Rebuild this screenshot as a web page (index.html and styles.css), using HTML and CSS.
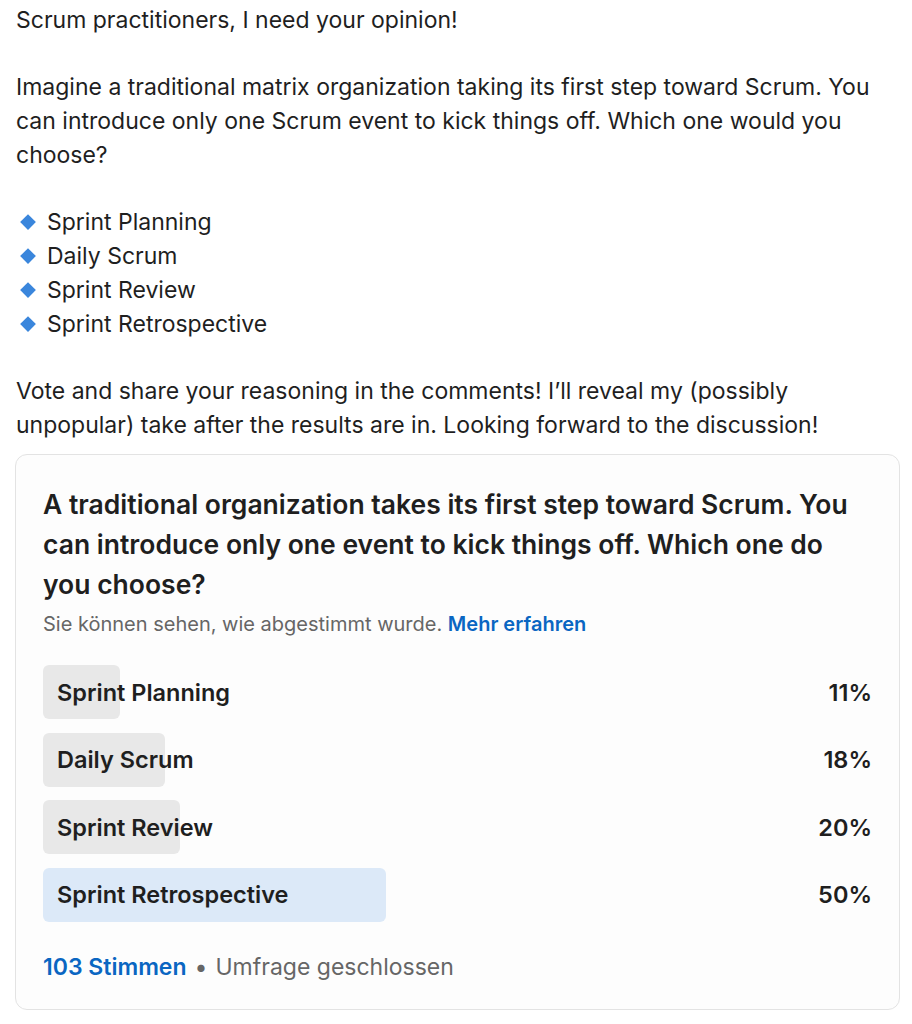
FILE: index.html
```html
<!DOCTYPE html>
<html lang="en">
<head>
    <meta charset="UTF-8">
    <meta name="viewport" content="width=device-width, initial-scale=1.0">
    <title>Scrum poll</title>
    <link rel="stylesheet" href="styles.css">
</head>
<body>

<!-- Texte du post -->
<div class="post-text">
    <p>Scrum practitioners, I need your opinion!</p>
    <p>Imagine a traditional matrix organization taking its first step toward Scrum. You can introduce only one Scrum event to kick things off. Which one would you choose?</p>
    <ul class="events">
        <li><svg class="diamond" viewBox="0 0 16 16"><path d="M8 1 L15 8 L8 15 L1 8 Z"/></svg>Sprint Planning</li>
        <li><svg class="diamond" viewBox="0 0 16 16"><path d="M8 1 L15 8 L8 15 L1 8 Z"/></svg>Daily Scrum</li>
        <li><svg class="diamond" viewBox="0 0 16 16"><path d="M8 1 L15 8 L8 15 L1 8 Z"/></svg>Sprint Review</li>
        <li><svg class="diamond" viewBox="0 0 16 16"><path d="M8 1 L15 8 L8 15 L1 8 Z"/></svg>Sprint Retrospective</li>
    </ul>
    <p>Vote and share your reasoning in the comments! I’ll reveal my (possibly unpopular) take after the results are in. Looking forward to the discussion!</p>
</div>

<!-- Sondage -->
<section class="poll">
    <h2>A traditional organization takes its first step toward Scrum. You can introduce only one event to kick things off. Which one do you choose?</h2>
    <div class="poll-note">Sie können sehen, wie abgestimmt wurde. <a href="#">Mehr erfahren</a></div>

    <div class="options">
        <div class="option">
            <div class="track">
                <div class="bar" style="width: 11.2%"></div>
                <span class="label">Sprint Planning</span>
            </div>
            <span class="pct">11%</span>
        </div>
        <div class="option">
            <div class="track">
                <div class="bar" style="width: 17.8%"></div>
                <span class="label">Daily Scrum</span>
            </div>
            <span class="pct">18%</span>
        </div>
        <div class="option">
            <div class="track">
                <div class="bar" style="width: 20%"></div>
                <span class="label">Sprint Review</span>
            </div>
            <span class="pct">20%</span>
        </div>
        <div class="option winner">
            <div class="track">
                <div class="bar" style="width: 50%"></div>
                <span class="label">Sprint Retrospective</span>
            </div>
            <span class="pct">50%</span>
        </div>
    </div>

    <div class="poll-footer">
        <a href="#">103 Stimmen</a>
        <span class="dot">•</span>
        <span>Umfrage geschlossen</span>
    </div>
</section>

</body>
</html>
```

FILE: styles.css
```css
body {
    font-family: 'Inter', 'Noto Sans', sans-serif;
    margin: 0;
    padding: 0 12px 0 16px;
    background: #fff;
    color: #1f1f1f;
}

/* Texte du post */
.post-text {
    font-size: 23px;
    line-height: 34px;
    padding-top: 3px;
}

.post-text p {
    margin: 0 0 33px;
}

.post-text p:last-child {
    margin-bottom: 12px;
}

.events {
    list-style: none;
    margin: 0 0 33px;
    padding: 0;
}

.events li {
    display: flex;
    align-items: center;
    gap: 10px;
}

.diamond {
    width: 18px;
    height: 18px;
    margin-left: 3px;
    fill: #3a86dc;
}

/* Sondage */
.poll {
    margin-left: -1px;
    border: 1px solid #e3e3e3;
    border-radius: 12px;
    background: #fdfdfd;
    padding: 29px 27px 28px;
}

.poll h2 {
    margin: 0;
    font-size: 26.5px;
    font-weight: 600;
    line-height: 40px;
    color: #1f1f1f;
}

.poll-note {
    font-size: 20px;
    line-height: 24px;
    color: #666;
    margin-top: 8px;
}

.poll-note a {
    color: #0a66c2;
    font-weight: 600;
    text-decoration: none;
}

.options {
    display: flex;
    flex-direction: column;
    gap: 13.5px;
    margin-top: 29px;
}

.option {
    display: flex;
    align-items: center;
    justify-content: space-between;
}

.track {
    position: relative;
    width: 686px;
    height: 54px;
    display: flex;
    align-items: center;
}

.bar {
    position: absolute;
    top: 0;
    left: 0;
    bottom: 0;
    background: #e8e8e8;
    border-radius: 6px;
}

.winner .bar {
    background: #dce9f8;
}

.label {
    position: relative;
    padding-left: 14px;
    font-size: 23.5px;
    font-weight: 600;
}

.pct {
    font-size: 23.5px;
    font-weight: 600;
}

.poll-footer {
    margin-top: 31px;
    font-size: 23px;
    line-height: 28px;
    color: #666;
    display: flex;
    gap: 8px;
}

.poll-footer a {
    color: #0a66c2;
    font-weight: 600;
    text-decoration: none;
}
```
